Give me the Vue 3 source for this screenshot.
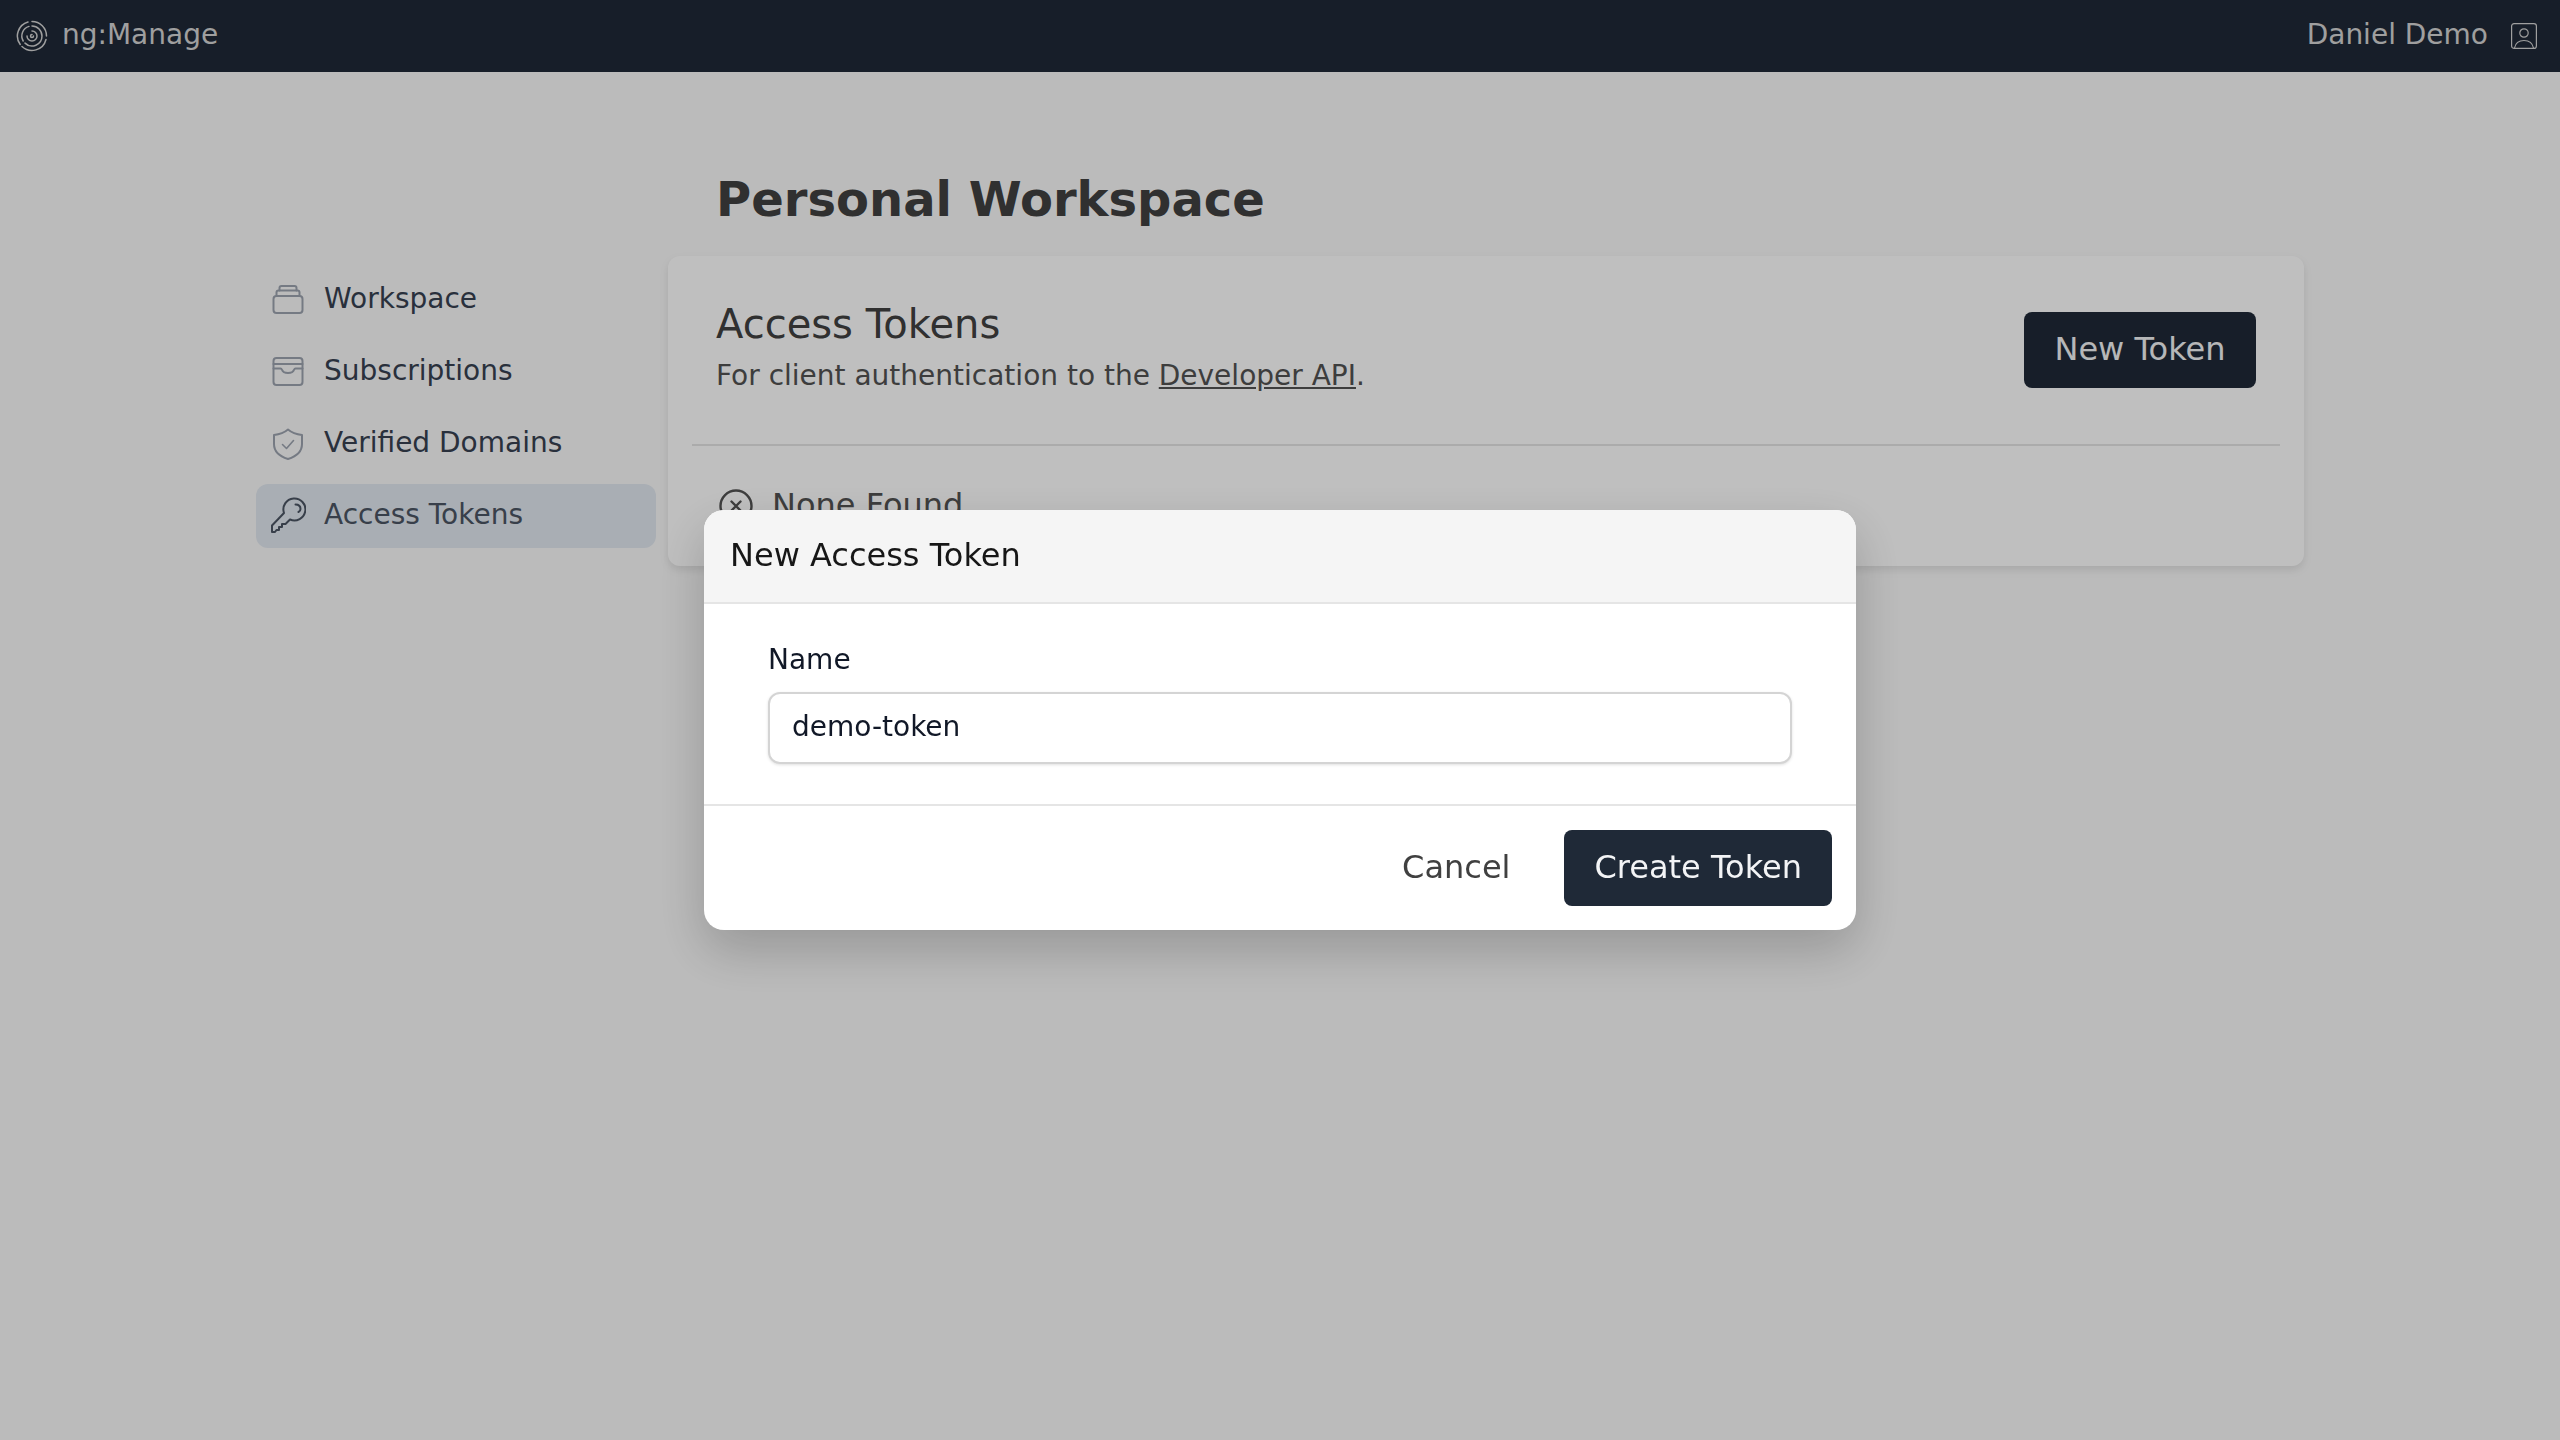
<script setup>
const navItems = [
  { label: 'Workspace', icon: 'box' },
  { label: 'Subscriptions', icon: 'archive' },
  { label: 'Verified Domains', icon: 'shield' },
  { label: 'Access Tokens', icon: 'key', active: true },
]
</script>

<template>
  <div class="page">
    <header class="topbar">
      <div class="brand">
        <svg class="logo" viewBox="0 0 32 32" fill="none" stroke="currentColor" stroke-width="1.5" stroke-linecap="round">
          <path d="M16 1.500a14.500 14.500 0 0 1 14.500 14.500M30 19.500A14.500 14.500 0 0 1 6 26.500M4.200 24.500A14.500 14.500 0 0 1 12 2" />
          <path d="M16 6a10 10 0 0 1 10 10 10 10 0 0 1-17 7.100M7.200 21A10 10 0 0 1 13 6.400" />
          <path d="M16 11a5 5 0 1 1-5 5" />
          <path d="M16 14.500a1.500 1.500 0 1 0 1.500 1.500" />
        </svg>
        <span class="bar-text">ng:Manage</span>
      </div>
      <div class="user">
        <span class="bar-text">Daniel Demo</span>
        <svg class="user-icon" viewBox="0 0 26 26" fill="none" stroke="currentColor" stroke-width="1.2">
          <rect x="0.6" y="0.6" width="24.8" height="24.8" rx="2.5" />
          <circle cx="13" cy="10" r="4.2" />
          <path d="M3.500 25c1-5 5-7.500 9.500-7.500s8.500 2.500 9.500 7.500" />
        </svg>
      </div>
    </header>

    <main class="main">
      <aside class="sidebar">
        <a v-for="item in navItems" :key="item.label" class="nav-item" :class="{ active: item.active }">
          <svg v-if="item.icon === 'key'" class="key-icon" viewBox="0 0 36 36" fill="none" stroke="currentColor" stroke-width="2" stroke-linecap="round" stroke-linejoin="round">
            <path d="M14 16A11 11 0 1 1 20 22.500L15.500 27H12V30H9V33H6.500L5 35H2V28.500Z" />
            <path d="M25.500 7.500c3.500 0 5 2 5 4.500 0 1.500-1 2.500-2 3" />
          </svg>
          <svg v-else class="nav-icon" viewBox="0 0 32 32" fill="none" stroke="currentColor" stroke-width="2" stroke-linecap="round" stroke-linejoin="round">
            <template v-if="item.icon === 'box'">
              <rect x="1.500" y="12" width="29" height="17" rx="3" />
              <path d="M4.500 12V8.500a2 2 0 0 1 2-2h19a2 2 0 0 1 2 2V12" />
              <path d="M7.500 6.500V4a2 2 0 0 1 2-2h13a2 2 0 0 1 2 2v2.500" />
            </template>
            <template v-else-if="item.icon === 'archive'">
              <rect x="1.500" y="2" width="29" height="27" rx="3" />
              <path d="M1.500 8h29M1.500 12.500h7c.8 0 1.200.6 1.500 1.300.6 1.800 2.800 3.200 6 3.200s5.400-1.400 6-3.200c.3-.7.7-1.300 1.500-1.300h7" />
            </template>
            <template v-else>
              <path d="M16 1.500c3 2.500 8 4.700 14 5.500v9c0 7.500-6 12.500-14 15C8 28.500 2 23.500 2 16V7c6-.8 11-3 14-5.500z" />
              <path d="M10.500 16.500l4 4 7-8" stroke-width="1.600" />
            </template>
          </svg>
          <span class="nav-label">{{ item.label }}</span>
        </a>
      </aside>

      <section class="content">
        <h1 class="title">Personal Workspace</h1>
        <div class="card">
          <div class="card-head">
            <div class="card-text">
              <h2 class="card-title">Access Tokens</h2>
              <p class="card-sub">For client authentication to the <a class="link">Developer API</a>.</p>
            </div>
            <button class="btn">New Token</button>
          </div>
          <div class="divider"></div>
          <div class="empty">
            <svg class="empty-icon" viewBox="0 0 36 36" fill="none" stroke="currentColor" stroke-width="2.400" stroke-linecap="round">
              <circle cx="18" cy="18" r="15.500" />
              <path d="M13.500 13.500l9 9M22.500 13.500l-9 9" />
            </svg>
            <span>None Found</span>
          </div>
        </div>
      </section>
    </main>

    <div class="overlay"></div>

    <div class="modal-wrap">
      <div class="modal">
        <div class="modal-head">New Access Token</div>
        <div class="modal-body">
          <label class="field-label">Name</label>
          <input class="field" value="demo-token" />
        </div>
        <div class="modal-foot">
          <button class="btn-text">Cancel</button>
          <button class="btn btn-modal">Create Token</button>
        </div>
      </div>
    </div>
  </div>
</template>

<style>
html, body { margin: 0; padding: 0; background: #fafafa; }
</style>

<style scoped>
.page {
  min-height: 1440px;
  background: #fafafa;
  font-family: "DejaVu Sans", sans-serif;
  color: #404040;
}
.topbar {
  height: 72px;
  background: #1f2937;
  color: #d4d4d4;
  display: flex;
  align-items: center;
  justify-content: space-between;
  padding: 0 23px 0 16px;
  font-size: 28px;
  box-sizing: border-box;
}
.bar-text { padding-bottom: 3px; }
.brand, .user { display: flex; align-items: center; }
.brand { gap: 14px; }
.user { gap: 23px; }
.logo { width: 32px; height: 32px; }
.user-icon { width: 26px; height: 26px; }
.main {
  display: flex;
  align-items: flex-start;
  padding: 99px 256px 0;
}
.sidebar {
  width: 400px;
  margin-top: 97px;
  margin-right: 12px;
  display: flex;
  flex-direction: column;
  gap: 8px;
  flex: none;
}
.nav-item {
  height: 64px;
  display: flex;
  align-items: center;
  gap: 20px;
  padding: 0 16px;
  border-radius: 12px;
  font-size: 28px;
  color: #374151;
}
.nav-label { padding-bottom: 3px; }
.nav-item.active { background: #e2e8f0; color: #4b5563; }
.nav-icon { width: 32px; height: 32px; color: #9ca3af; flex: none; }
.key-icon { width: 36px; height: 36px; margin: -2px -2px 0; color: #4b5563; flex: none; }
.content { flex: 1; min-width: 0; }
.title {
  margin: 0 0 29px 48px;
  font-size: 48px;
  line-height: 56px;
  font-weight: 700;
  color: #404040;
}
.card {
  background: #fff;
  border-radius: 12px;
  box-shadow: 0 4px 8px rgba(0, 0, 0, 0.1);
  padding: 0 24px;
  height: 310px;
  overflow: hidden;
  box-sizing: border-box;
}
.card-head {
  height: 188px;
  display: flex;
  align-items: center;
  justify-content: space-between;
  padding: 0 24px;
}
.card-text { padding-bottom: 6px; }
.card-title { margin: 0; font-size: 40px; font-weight: 400; line-height: 48px; color: #404040; }
.card-sub { margin: 10px 0 0; font-size: 28px; line-height: 36px; color: #525252; }
.link { text-decoration: underline; }
.divider { height: 2px; background: #e5e5e5; }
.empty {
  display: flex;
  align-items: center;
  gap: 18px;
  padding: 40px 26px;
  font-size: 32px;
  color: #525252;
}
.empty-icon { width: 36px; height: 36px; margin-top: 1px; }
.btn {
  height: 76px;
  min-width: 232px;
  padding: 0 30px 2px;
  border: none;
  border-radius: 8px;
  background: #1f2937;
  color: #f3f4f6;
  font-family: inherit;
  font-size: 32px;
}
.overlay {
  position: fixed;
  inset: 0;
  background: rgba(0, 0, 0, 0.25);
}
.modal-wrap {
  position: fixed;
  inset: 0;
  display: flex;
  align-items: center;
  justify-content: center;
}
.modal {
  width: 1152px;
  background: #fff;
  border-radius: 20px;
  box-shadow: 0 20px 50px rgba(0, 0, 0, 0.2);
  overflow: hidden;
  color: #171717;
}
.modal-head {
  display: flex;
  align-items: center;
  padding: 0 26px 2px;
  box-sizing: border-box;
  height: 94px;
  background: #f5f5f5;
  border-bottom: 2px solid #e5e5e5;
  font-size: 32px;
}
.modal-body {
  height: 200px;
  padding: 38px 64px 0;
  box-sizing: border-box;
  display: flex;
  flex-direction: column;
}
.field-label { font-size: 28px; line-height: 36px; margin-bottom: 14px; color: #111827; }
.field {
  height: 72px;
  box-sizing: border-box;
  width: 100%;
  border: 2px solid #d4d4d4;
  border-radius: 12px;
  padding: 0 22px 3px;
  font-family: inherit;
  font-size: 28px;
  color: #111827;
  box-shadow: 0 1px 3px rgba(0, 0, 0, 0.12);
  outline: none;
}
.modal-foot {
  border-top: 2px solid #e5e5e5;
  display: flex;
  justify-content: flex-end;
  align-items: center;
  gap: 24px;
  padding: 24px;
}
.btn-text {
  height: 76px;
  padding: 0 30px 2px;
  border: none;
  background: none;
  font-family: inherit;
  font-size: 32px;
  color: #404040;
}
</style>
